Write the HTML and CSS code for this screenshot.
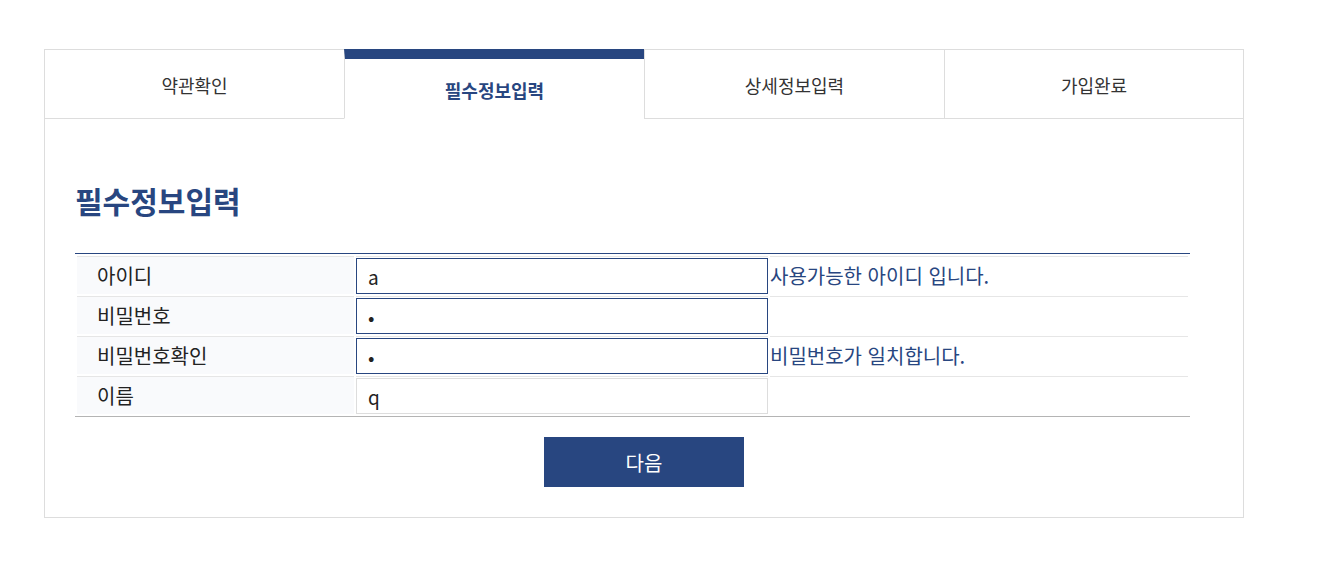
FILE: index.html
```html
<!DOCTYPE html>
<html lang="ko">
<head>
    <meta charset="UTF-8">
    <meta name="viewport" content="width=device-width, initial-scale=1.0">
    <title>회원가입 - 필수정보입력</title>
    <link rel="stylesheet" href="styles.css">
</head>
<body>

<div class="join">
    <ul class="steps">
        <li>약관확인</li>
        <li class="on">필수정보입력</li>
        <li>상세정보입력</li>
        <li>가입완료</li>
    </ul>

    <div class="join-body">
        <h2 class="title">필수정보입력</h2>

        <table class="form-table">
            <tr>
                <th>아이디</th>
                <td class="cell-input"><input type="text" class="ok" value="a"></td>
                <td class="msg">사용가능한 아이디 입니다.</td>
            </tr>
            <tr>
                <th>비밀번호</th>
                <td class="cell-input"><input type="password" class="ok" value="1"></td>
                <td class="msg"></td>
            </tr>
            <tr>
                <th>비밀번호확인</th>
                <td class="cell-input"><input type="password" class="ok" value="1"></td>
                <td class="msg">비밀번호가 일치합니다.</td>
            </tr>
            <tr>
                <th>이름</th>
                <td class="cell-input"><input type="text" value="q"></td>
                <td class="msg"></td>
            </tr>
        </table>

        <div class="btn-area">
            <button class="btn-next">다음</button>
        </div>
    </div>
</div>

</body>
</html>
```

FILE: styles.css
```css
body {
    margin: 0;
    font-family: "Noto Sans CJK KR", "Noto Sans", sans-serif;
    color: #222;
    background: #fff;
}

.join {
    width: 1200px;
    margin: 49px 0 0 44px;
}

/* step tabs */
.steps {
    display: flex;
    margin: 0;
    padding: 0;
    list-style: none;
}

.steps li {
    width: 300px;
    height: 70px;
    box-sizing: border-box;
    border: 1px solid #ddd;
    border-right: none;
    display: flex;
    align-items: center;
    justify-content: center;
    padding-top: 1px;
    font-size: 18px;
    color: #333;
}

.steps li:last-child {
    border-right: 1px solid #ddd;
}

.steps li.on {
    border-top: 10px solid #284680;
    border-bottom-color: #fff;
    padding-top: 3px;
    font-weight: bold;
    color: #284680;
}

/* body */
.join-body {
    border: 1px solid #ddd;
    border-top: none;
    padding: 62px 30px 30px;
}

.title {
    margin: 0 0 33px;
    font-size: 30px;
    line-height: 39px;
    font-weight: bold;
    color: #284680;
}

.form-table {
    width: 1115px;
    border-collapse: separate;
    border-spacing: 2px;
    border-top: 1px solid #284680;
    border-bottom: 1px solid #b4b4b4;
}

.form-table th,
.form-table td {
    border-top: 1px solid #e6e6e6;
    height: 37px;
    padding: 0;
    font-size: 20px;
}

.form-table th {
    width: 257px;
    padding-left: 20px;
    text-align: left;
    font-weight: normal;
    background: #f9fafc;
}

.form-table .cell-input {
    width: 412px;
    height: 36px;
    padding-top: 1px;
    vertical-align: top;
}

.form-table input {
    display: block;
    width: 412px;
    height: 36px;
    box-sizing: border-box;
    margin: 0;
    padding: 0 11px;
    border: 1px solid #ddd;
    font-family: inherit;
    font-size: 19px;
    color: #222;
    outline: none;
}

.form-table input.ok {
    border-color: #284680;
}

.form-table .msg {
    color: #284680;
}

.btn-area {
    margin-top: 20px;
    text-align: center;
}

.btn-next {
    width: 200px;
    height: 50px;
    border: none;
    background: #284680;
    color: #fff;
    font-family: inherit;
    font-size: 20px;
    cursor: pointer;
}
```
